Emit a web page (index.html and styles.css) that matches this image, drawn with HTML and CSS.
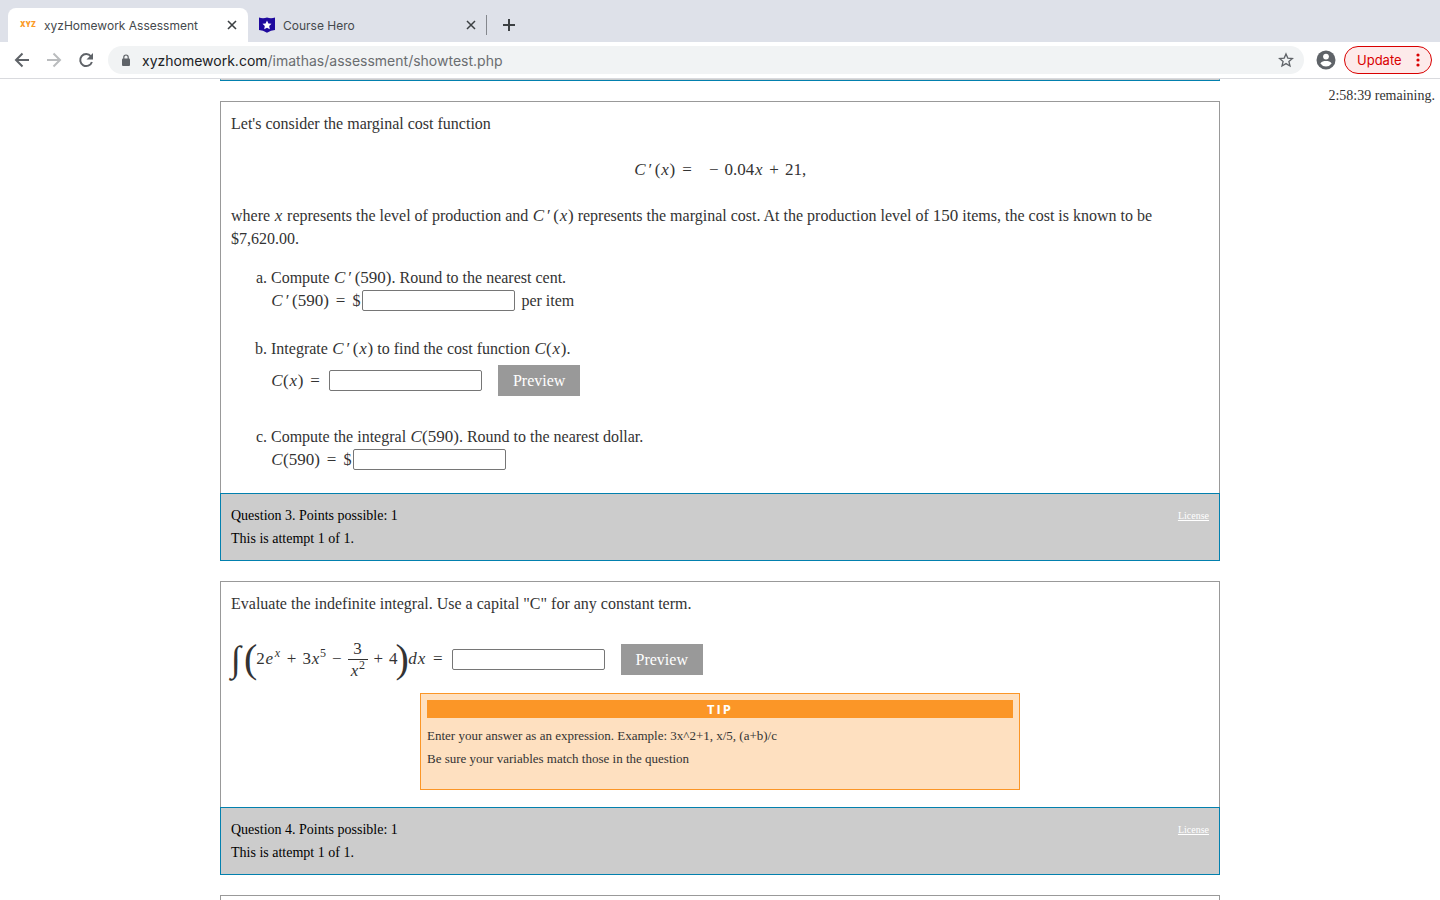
FILE: index.html
```html
<!DOCTYPE html>
<html lang="en">
<head>
<meta charset="utf-8">
<title>xyzHomework Assessment</title>
<link rel="stylesheet" href="styles.css">
</head>
<body>
<header class="browser">
  <div class="tabs">
    <div class="tab tab-active">
      <span class="favicon-xyz">XYZ</span>
      <span class="tab-title">xyzHomework Assessment</span>
      <button class="icon-btn" aria-label="Close xyzHomework Assessment"><svg width="10" height="10" viewBox="0 0 10 10"><path d="M1 1l8 8M9 1l-8 8" stroke="#3c4043" stroke-width="1.6"/></svg></button>
    </div>
    <div class="tab">
      <svg width="16" height="16" viewBox="0 0 16 16"><path d="M0 .5q4 1.4 8 0 4 1.4 8 0V13q-4 .3-8 2.800Q4 13.300 0 13z" fill="#1f0a9e"/><path d="M8 3.400l1.400 3 3.100.4-2.300 2.200.6 3.200L8 10.700l-2.800 1.500.6-3.200L3.500 6.800l3.100-.4z" fill="#fff"/></svg>
      <span class="tab-title">Course Hero</span>
      <button class="icon-btn" aria-label="Close Course Hero"><svg width="10" height="10" viewBox="0 0 10 10"><path d="M1 1l8 8M9 1l-8 8" stroke="#3c4043" stroke-width="1.5"/></svg></button>
    </div>
    <span class="tab-divider"></span>
    <button class="icon-btn new-tab" aria-label="New tab"><svg width="12" height="12" viewBox="0 0 12 12"><path d="M6 0v12M0 6h12" stroke="#3c4043" stroke-width="2"/></svg></button>
  </div>
  <div class="toolbar">
    <button class="icon-btn" aria-label="Back"><svg width="16" height="16" viewBox="0 0 16 16" fill="none" stroke="#5f6368" stroke-width="2"><path d="M15 8H2.500M8.500 1.500L2 8l6.500 6.500"/></svg></button>
    <button class="icon-btn" aria-label="Forward"><svg width="16" height="16" viewBox="0 0 16 16" fill="none" stroke="#babcbe" stroke-width="2"><path d="M1 8h12.500M7.500 1.500L14 8l-6.500 6.500"/></svg></button>
    <button class="icon-btn" aria-label="Reload"><svg width="16" height="16" viewBox="0 0 16 16"><path d="M12.900 4.300A6 6 0 1 0 13.900 10" fill="none" stroke="#5f6368" stroke-width="2"/><path d="M15 1v6.500H8.500z" fill="#5f6368"/></svg></button>
    <div class="omnibox">
      <svg width="10" height="13" viewBox="0 0 10 13"><rect x="1" y="4.500" width="8" height="7.500" rx="1" fill="#5f6368"/><path d="M2.800 5V3.200a2.200 2.200 0 0 1 4.400 0V5" fill="none" stroke="#5f6368" stroke-width="1.200"/></svg>
      <span class="url"><b>xyzhomework.com</b>/imathas/assessment/showtest.php</span>
      <button class="icon-btn" aria-label="Bookmark this tab"><svg width="16" height="16" viewBox="0 0 16 16"><path d="M8 1.900l1.800 4.200 4.600.4-3.500 3 1.100 4.500L8 11.600 4 14l1.100-4.500-3.500-3 4.600-.4z" fill="none" stroke="#5f6368" stroke-width="1.300"/></svg></button>
    </div>
    <button class="icon-btn" aria-label="Profile"><svg width="20" height="20" viewBox="0 0 20 20"><circle cx="10" cy="10" r="9.500" fill="#5f6368"/><circle cx="10" cy="6.600" r="2.900" fill="#fff"/><path d="M4.400 13.400C5.200 11.500 8 10.900 10 10.900s4.800.6 5.600 2.500A6.900 6.900 0 0 1 10 16.500a6.900 6.900 0 0 1-5.600-3.100z" fill="#fff"/></svg></button>
    <button class="update">Update <svg width="4" height="14" viewBox="0 0 4 14" fill="#d90000"><circle cx="2" cy="2" r="1.600"/><circle cx="2" cy="7" r="1.600"/><circle cx="2" cy="12" r="1.600"/></svg></button>
  </div>
</header>
<main class="page">
  <p class="timer">2:58:39 remaining.</p>
  <div class="column">
    <div class="previous-end"></div>

    <section class="question">
      <div class="body">
        <p>Let's consider the marginal cost function</p>
        <p class="display"><span class="math"><i class="cap">C</i><span class="prime">′</span>(<i>x</i>)<span class="op rel">=</span> <span class="op">−</span>0.04<i>x</i><span class="op">+</span>21,</span></p>
        <p>where <span class="math"><i>x</i></span> represents the level of production and <span class="math"><i class="cap">C</i><span class="prime">′</span>(<i>x</i>)</span> represents the marginal cost. At the production level of <span class="math">150</span> items, the cost is known to be $7,620.00.</p>
        <ol class="parts">
          <li>Compute <span class="math"><i class="cap">C</i><span class="prime">′</span>(590)</span>. Round to the nearest cent.
            <div class="answer"><label for="qa"><span class="math"><i class="cap">C</i><span class="prime">′</span>(590)<span class="op rel">=</span></span>$</label><input id="qa" type="text"><span class="unit">per item</span></div></li>
          <li>Integrate <span class="math"><i class="cap">C</i><span class="prime">′</span>(<i>x</i>)</span> to find the cost function <span class="math"><i class="cap">C</i>(<i>x</i>)</span>.
            <div class="answer with-button"><label for="qb"><span class="math"><i class="cap">C</i>(<i>x</i>)<span class="op rel">=</span></span></label><input id="qb" type="text"><button class="preview">Preview</button></div></li>
          <li>Compute the integral <span class="math"><i class="cap">C</i>(590)</span>. Round to the nearest dollar.
            <div class="answer"><label for="qc"><span class="math"><i class="cap">C</i>(590)<span class="op rel">=</span></span>$</label><input id="qc" type="text"></div></li>
        </ol>
      </div>
      <footer class="info">
        <div><p>Question 3. Points possible: 1</p><p>This is attempt 1 of 1.</p></div>
        <a href="#">License</a>
      </footer>
    </section>

    <section class="question">
      <div class="body">
        <p>Evaluate the indefinite integral. Use a capital "C" for any constant term.</p>
        <div class="answer integral-row">
          <label for="qd" class="math equation"><span class="integral">∫</span><span class="paren">(</span><span>2<i>e</i><sup><i>x</i></sup><span class="op">+</span>3<i>x</i><sup>5</sup><span class="op">−</span></span><span class="fraction"><span class="numerator">3</span><span><i>x</i><sup>2</sup></span></span><span><span class="op">+</span>4</span><span class="paren">)</span><span><i>d</i><i>x</i><span class="op rel">=</span></span></label>
          <input id="qd" type="text"><button class="preview">Preview</button>
        </div>
        <aside class="tip">
          <h2>TIP</h2>
          <p>Enter your answer as an expression. Example: 3x^2+1, x/5, (a+b)/c</p>
          <p>Be sure your variables match those in the question</p>
        </aside>
      </div>
      <footer class="info">
        <div><p>Question 4. Points possible: 1</p><p>This is attempt 1 of 1.</p></div>
        <a href="#">License</a>
      </footer>
    </section>

    <section class="question"><div class="body"></div></section>
  </div>
</main>
</body>
</html>
```
FILE: styles.css
```css
* { box-sizing: border-box; }
html, body { margin: 0; height: 100%; }
body {
  display: flex;
  flex-direction: column;
  overflow: hidden;
  background: #fff;
  color: #333;
  font: 16px/23px "Liberation Serif", serif;
}
p { margin: 0; }
button { font: inherit; border: 0; padding: 0; cursor: pointer; }
svg { display: block; flex: none; }

/* Browser chrome */
.browser { flex: none; font-family: Inter, sans-serif; border-bottom: 1px solid #d9dade; }
.tabs { display: flex; align-items: center; height: 42px; padding: 8px 8px 0; background: #dee1e9; }
.tab { display: flex; align-items: center; gap: 8px; width: 240px; height: 34px; padding: 0 12px 0 11px; color: #45494d; font-size: 12px; }
.tab-active { background: #fff; border-radius: 8px 8px 0 0; padding: 0 11px 0 12px; }
.tab-title { flex: 1; white-space: nowrap; }
.favicon-xyz { width: 16px; color: #fb9a26; font-size: 7px; font-weight: 900; line-height: 16px; }
.icon-btn { display: flex; background: none; flex: none; }
.tab-divider { width: 1px; height: 20px; margin-left: -2px; background: #84878d; }
.new-tab { margin-left: 16px; }
.toolbar { display: flex; align-items: center; gap: 16px; height: 36px; padding: 0 8px 0 14px; }
.omnibox { display: flex; align-items: center; flex: 1; gap: 11px; height: 28px; margin: 0 -4px 0 -2px; padding: 0 10px 0 13px; border-radius: 14px; background: #f1f3f4; }
.url { flex: 1; color: #6a6d70; font-size: 14px; }
.url b { color: #202124; font-weight: 400; }
.update { display: flex; align-items: center; justify-content: space-between; width: 88px; height: 28px; margin-left: -8px; padding: 0 11px 0 12px; border: 1px solid #d90000; border-radius: 14px; background: #fdeaea; color: #d90000; font-size: 13px; }

/* Assessment */
.page { position: relative; flex: 1; overflow: hidden; padding: 0 20px; }
.timer { position: absolute; top: 5px; right: 5px; font-size: 14px; }
.column { max-width: 1000px; margin: 0 auto; }
.previous-end { height: 2px; border: 1px solid #0280ae; border-top-color: #ccc; }
.question { margin-top: 20px; }
.body { padding: 10px; border: 1px solid #999; border-bottom: 0; }
.display { margin: 23px 0; text-align: center; }
.parts { list-style: lower-alpha; margin: 16px 0 12px; padding-left: 40px; }
.parts li + li { margin-top: 25px; }
.answer { display: flex; align-items: center; height: 23px; }
.answer.with-button { height: 40px; }
input { width: 153px; height: 21px; margin: 0; padding: 1px 2px; border: 1px solid #767676; border-radius: 2px; font: inherit; }
label + input { margin-left: 2px; }
.unit { margin-left: 6px; }
.preview { height: 31px; padding: 0 15px; margin-left: 16px; background: #999; color: #fff; }
.info { display: flex; justify-content: space-between; padding: 10px; border: 1px solid #0280ae; background: #ccc; color: #000; font-size: 14px; }
.info a { color: #fff; font-size: 10px; }

/* Formulas */
.math { font-size: 17px; line-height: 20px; white-space: nowrap; }
.math i { display: inline-block; min-width: 9px; text-align: center; }
.math .cap { min-width: 12px; }
.prime { display: inline-block; min-width: 9px; text-align: center; }
.op { margin: 0 6px; }
.rel { margin: 0 7px; }
.integral-row { height: 42px; margin: 23px 0 13px; }
.equation { display: flex; align-items: center; height: 42px; }
.equation sup { font-size: 12px; line-height: 0; }
.equation sup i { min-width: 7px; }
.integral { width: 15px; font-size: 36px; font-style: italic; line-height: 42px; }
.paren { font-size: 40px; line-height: 36px; margin: 0 -2px; }
.paren + span { margin-left: 1px; }
.fraction { display: flex; flex-direction: column; align-items: center; line-height: 21px; }
.numerator { width: 20px; text-align: center; border-bottom: 1px solid #333; }

/* Entry tip */
.tip { max-width: 600px; height: 97px; margin: 0 auto 7px; padding: 6px; border: 1px solid #fb9627; background: #fee0c0; font-size: 13px; }
.tip h2 { margin: 0 0 6px; background: #fb9627; color: #fff; font: 700 13px/18px "Open Sans", sans-serif; letter-spacing: 2px; text-align: center; }
```
